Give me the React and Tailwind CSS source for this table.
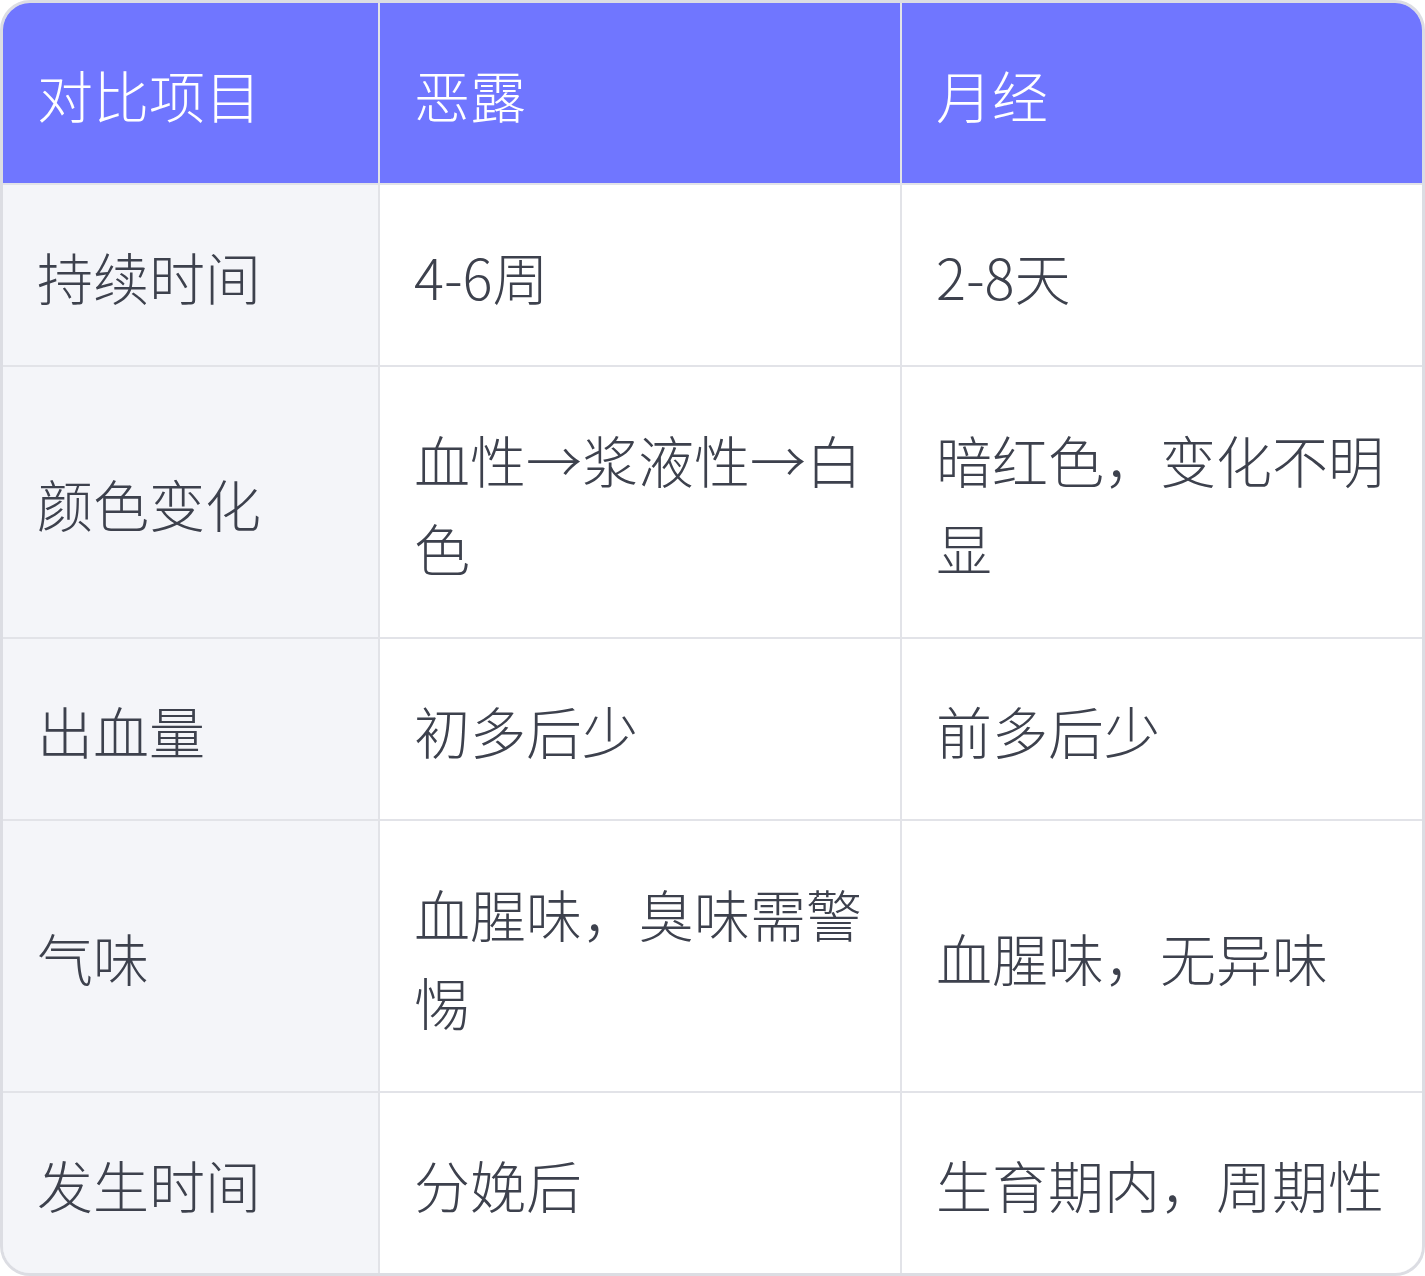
const rows = [
  ['持续时间', '4-6周', '2-8天'],
  ['颜色变化', '血性→浆液性→白色', '暗红色，变化不明显'],
  ['出血量', '初多后少', '前多后少'],
  ['气味', '血腥味，臭味需警惕', '血腥味，无异味'],
  ['发生时间', '分娩后', '生育期内，周期性'],
]

const font = { fontFamily: '"Noto Sans CJK SC", "Noto Sans", sans-serif' }

export default function App() {
  return (
    <main className="h-[1276px] w-[1425px] bg-white" style={font}>
      <div className="h-full w-full overflow-hidden rounded-[30px] border-[3px] border-[#dcdde3]">
        <div className="grid grid-cols-[375px_520px_520px] gap-[2px] bg-[#e2e3e8] text-[56px] font-light leading-[88px]">
          {['对比项目', '恶露', '月经'].map((h) => (
            <div key={h} className="flex h-[180px] items-center bg-[#7076ff] px-[34px] pt-[2px] text-white">{h}</div>
          ))}
          {rows.map((r) => r.map((c, i) => (
            <div
              key={r[0] + i}
              className={`flex items-center px-[34px] pt-[2px] text-[#3d414d] ${i === 0 ? 'bg-[#f4f5f9]' : 'bg-white'} ${r[0] === '颜色变化' || r[0] === '气味' ? 'h-[270px]' : 'h-[180px]'}`}
            >
              <span className="break-all">{c}</span>
            </div>
          )))}
        </div>
      </div>
    </main>
  )
}
